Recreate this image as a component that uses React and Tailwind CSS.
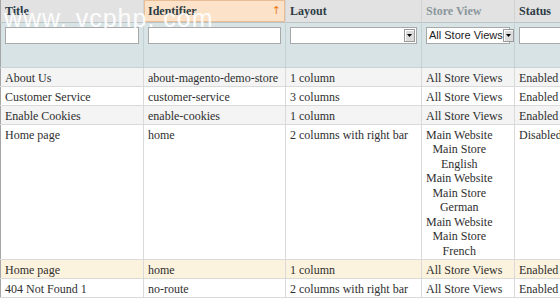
const rows = [
  { title: 'About Us', id: 'about-magento-demo-store', layout: '1 column', store: ['All Store Views'], status: 'Enabled', bg: 'bg-[#f4f4f4]' },
  { title: 'Customer Service', id: 'customer-service', layout: '3 columns', store: ['All Store Views'], status: 'Enabled', bg: 'bg-white' },
  { title: 'Enable Cookies', id: 'enable-cookies', layout: '1 column', store: ['All Store Views'], status: 'Enabled', bg: 'bg-[#f4f4f4]' },
  {
    title: 'Home page',
    id: 'home',
    layout: '2 columns with right bar',
    store: ['Main Website', 'Main Store', 'English', 'Main Website', 'Main Store', 'German', 'Main Website', 'Main Store', 'French'],
    status: 'Disabled',
    bg: 'bg-white',
  },
  { title: 'Home page', id: 'home', layout: '1 column', store: ['All Store Views'], status: 'Enabled', bg: 'bg-[#fcf3de]' },
  { title: '404 Not Found 1', id: 'no-route', layout: '2 columns with right bar', store: ['All Store Views'], status: 'Enabled', bg: 'bg-white' },
];

function Arrow() {
  return (
    <span className="flex h-[13px] w-[11px] shrink-0 items-center justify-center border border-[#9a9a9a] bg-[#dcdcdc] shadow-[inset_1px_1px_0_#fff]">
      <svg width="5" height="3" viewBox="0 0 5 3">
        <path d="M0 0h5L2.5 3z" fill="#000" />
      </svg>
    </span>
  );
}

function Select({ value }) {
  return (
    <div className="flex h-[17px] items-center justify-between border border-[#a9a9a9] bg-white pl-[2px] pr-[1px] font-['Liberation_Sans',sans-serif] text-[11px] text-[#222]">
      <span className="whitespace-nowrap">{value}</span>
      <Arrow />
    </div>
  );
}

function Input() {
  return <div className="h-[17px] border border-[#a9a9a9] bg-white" />;
}

export default function App() {
  const th = 'h-[22px] border-r border-[#d0d4d5] px-[4px] text-left align-middle text-[12px] font-bold';
  const fc = 'h-[45px] border-r border-[#c4d2d6] px-[4px] pt-[4px] align-top';
  const td = 'border-r border-b border-[#dadada] px-[4px] pt-[3px] pb-[1px] align-top leading-[14px] whitespace-nowrap';
  return (
    <div className="relative h-[300px] w-[560px] overflow-hidden bg-white font-['Liberation_Serif',serif] text-[12px] text-[#2f2f2f]">
      <table className="w-[580px] table-fixed border-collapse border-l border-b border-[#a6a6a6]">
        <colgroup>
          <col className="w-[143px]" />
          <col className="w-[142px]" />
          <col className="w-[136px]" />
          <col className="w-[93px]" />
          <col className="w-[66px]" />
        </colgroup>
        <thead>
          <tr className="border-b border-[#bcc4c6] bg-[#e2e2e2] text-[#2d3c45]">
            <th className={th}>Title</th>
            <th className={`${th} bg-[#fbe2c8] shadow-[inset_0_0_0_1px_#e9bd95]`}>
              <div className="flex items-center justify-between">
                <span>Identifier</span>
                <span className="font-['DejaVu_Sans',sans-serif] text-[11px] font-normal text-[#ec7a1c]">↑</span>
              </div>
            </th>
            <th className={th}>Layout</th>
            <th className={`${th} text-[#8a969c]`}>Store View</th>
            <th className={th}>Status</th>
          </tr>
          <tr className="border-b border-[#c9d3d6] bg-[#d8e3e6]">
            <td className={fc}><Input /></td>
            <td className={fc}><Input /></td>
            <td className={fc}><Select value="" /></td>
            <td className={fc}><Select value="All Store Views" /></td>
            <td className={fc}><Input /></td>
          </tr>
        </thead>
        <tbody>
          {rows.map((r, i) => (
            <tr key={i} className={r.bg}>
              <td className={td}>{r.title}</td>
              <td className={td}>{r.id}</td>
              <td className={td}>{r.layout}</td>
              <td className={td}>
                {r.store.length > 1 ? (
                  <div className="w-fit text-center leading-[14.5px]">
                    {r.store.map((s, j) => (
                      <div key={j}>{s}</div>
                    ))}
                  </div>
                ) : (
                  r.store[0]
                )}
              </td>
              <td className={td}>{r.status}</td>
            </tr>
          ))}
        </tbody>
      </table>
      <div className="pointer-events-none absolute left-[4px] top-[3px] font-['Liberation_Sans',sans-serif] text-[25px] leading-[30px] tracking-[1px] text-white/90">
        www. vcphp. com
      </div>
    </div>
  );
}
